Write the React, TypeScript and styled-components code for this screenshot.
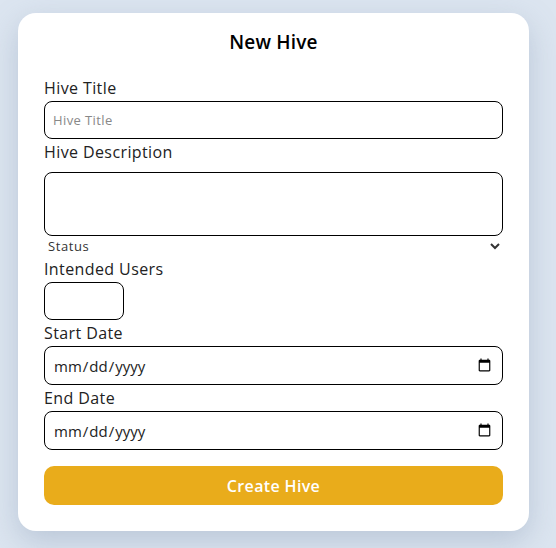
import React from "react";
import styled, { createGlobalStyle } from "styled-components";

const Global = createGlobalStyle`
  html, body { margin: 0; padding: 0; }
  body {
    background: #dce5f0;
    font-family: "Open Sans", "Noto Sans", sans-serif;
    min-height: 548px;
  }
`;

const Page = styled.div`
  padding: 13px 0 0 18px;
`;

const Card = styled.form`
  width: 511px;
  box-sizing: border-box;
  background: #ffffff;
  border-radius: 18px;
  padding: 17px 26px 26px 26px;
  box-shadow: 0 10px 30px rgba(120, 140, 170, 0.35);
  display: flex;
  flex-direction: column;
`;

const Title = styled.h2`
  margin: 0 0 24px 0;
  font-size: 19px;
  font-weight: 600;
  letter-spacing: 0.2px;
  line-height: 24px;
  text-align: center;
  color: #000;
`;

const Label = styled.label<{ $gap?: number }>`
  display: block;
  font-size: 16px;
  letter-spacing: 0.4px;
  line-height: 20px;
  color: #222;
  margin-bottom: ${(p) => p.$gap ?? 3}px;
`;

const Field = styled.input<{ $width?: number }>`
  box-sizing: border-box;
  width: ${(p) => (p.$width ? `${p.$width}px` : "100%")};
  height: ${(p) => (p.type === "date" ? 39 : 38)}px;
  border: 1px solid #000;
  border-radius: 8px;
  padding: 0 8px;
  font-family: inherit;
  font-size: ${(p) => (p.type === "date" ? 15 : 13)}px;
  letter-spacing: ${(p) => (p.type === "date" ? 0 : 0.4)}px;
  color: #222;
  background: #fff;
  margin: 0 0 3px 0;
  &::placeholder { color: #888; }
`;

const Area = styled.textarea`
  box-sizing: border-box;
  width: 100%;
  height: 64px;
  border: 1px solid #000;
  border-radius: 8px;
  resize: none;
  display: block;
  margin: 0;
`;

const Select = styled.select`
  border: none;
  background: transparent;
  font-family: inherit;
  font-size: 13px;
  letter-spacing: 0.6px;
  color: #333;
  width: 100%;
  height: 20px;
  padding: 0;
  margin: 0 0 3px 0;
  outline: none;
`;

const Button = styled.button`
  margin-top: 13px;
  height: 39px;
  width: 100%;
  border: none;
  border-radius: 10px;
  background: #e9ac1b;
  color: #fff;
  font-family: inherit;
  font-size: 16px;
  letter-spacing: 0.35px;
  font-weight: 600;
`;

export default function App() {
  return (
    <>
      <Global />
      <Page>
        <Card onSubmit={(e) => e.preventDefault()}>
          <Title>New Hive</Title>
          <Label>Hive Title</Label>
          <Field placeholder="Hive Title" />
          <Label $gap={10}>Hive Description</Label>
          <Area />
          <Select defaultValue="">
            <option value="">Status</option>
            <option value="open">Open</option>
            <option value="closed">Closed</option>
          </Select>
          <Label>Intended Users</Label>
          <Field $width={80} />
          <Label>Start Date</Label>
          <Field type="date" />
          <Label>End Date</Label>
          <Field type="date" />
          <Button type="submit">Create Hive</Button>
        </Card>
      </Page>
    </>
  );
}
